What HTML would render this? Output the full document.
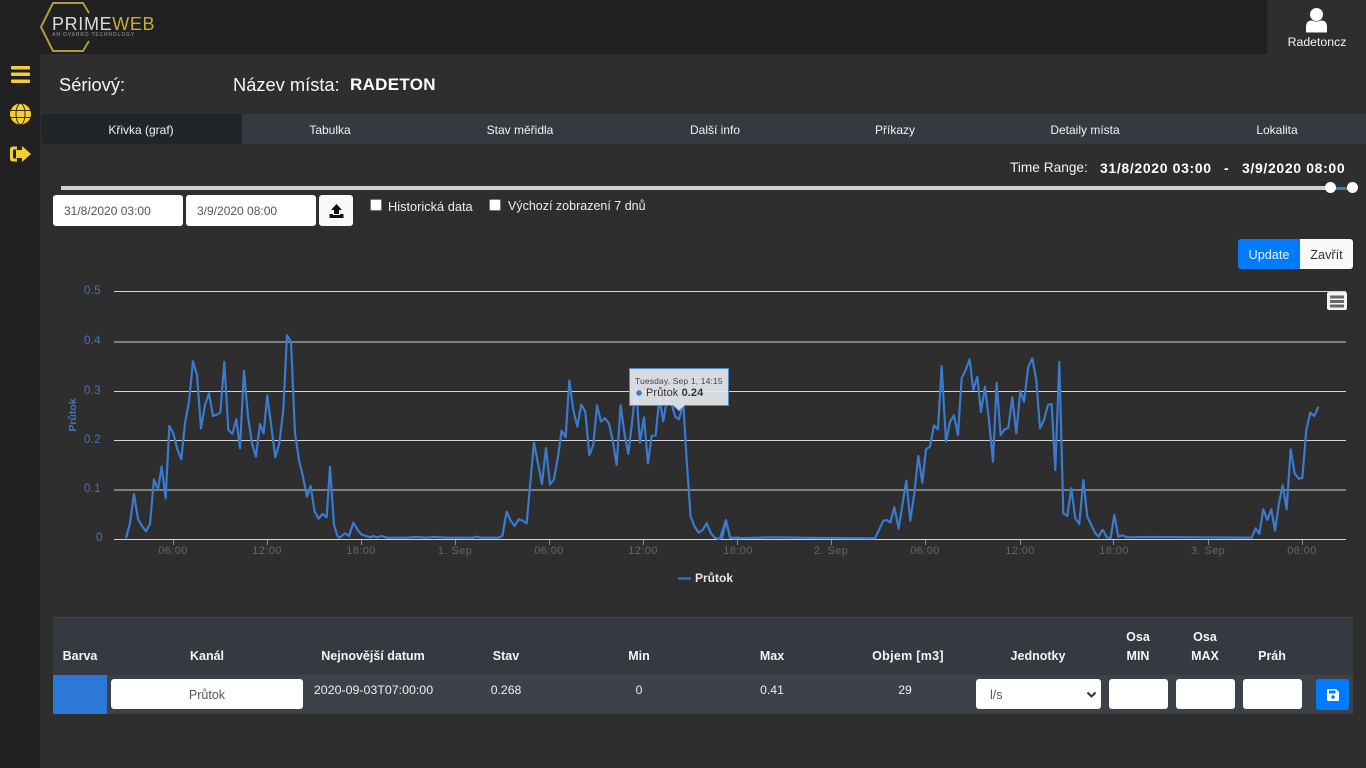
<!DOCTYPE html>
<html lang="cs"><head><meta charset="utf-8"><title>PrimeWeb</title>
<style>
*{box-sizing:border-box}
html,body{margin:0;padding:0;width:1366px;height:768px;overflow:hidden;background:#2e2e2e;font-family:"Liberation Sans",sans-serif;color:#fff}
.a{position:absolute;white-space:nowrap}
.c{position:absolute;white-space:nowrap;transform:translateX(-50%)}
.in{position:absolute;background:#fff;border-radius:3px;color:#555}
.tab{font-size:12px;top:122.500px;color:#f2f2f2}
.th{font-size:12.5px;font-weight:bold;color:#f5f5f5}
.td{font-size:12.2px;color:#eee}
.xl{position:absolute;top:545px;font-size:11px;color:#666;transform:translateX(-50%);letter-spacing:.4px}
.yl{position:absolute;left:84px;font-size:11.5px;color:#3f75c6;letter-spacing:.3px}
</style></head><body>
<div class="a" style="left:0;top:0;width:1366px;height:54px;background:#212121"></div>
<div class="a" style="left:0;top:54px;width:40px;height:714px;background:#212121"></div>
<div class="a" style="left:1267px;top:0;width:99px;height:54px;background:#2e2e2e"></div>

<svg class="a" style="left:38px;top:0" width="124" height="54" viewBox="0 0 124 54">
<path d="M51 13 L45 3 H15 L3 27 L15 51 H45 L51 41" fill="none" stroke="#b39a3a" stroke-width="2"/>
</svg>
<div class="a" style="left:52px;top:12px;font-size:18px;letter-spacing:.65px;color:#dcdcdc;line-height:24px">PRIME<span style="color:#c9a93a">WEB</span></div>
<div class="a" style="left:52px;top:32px;font-size:5px;letter-spacing:.8px;color:#7c7c7c;font-weight:bold;line-height:7px">AN OVARRO TECHNOLOGY</div>

<svg class="a" style="left:0;top:54px" width="40" height="120" viewBox="0 0 40 120">
<g fill="#f5cf32">
<rect x="11" y="12" width="19" height="3.500" rx="1"/><rect x="11" y="18.500" width="19" height="3.500" rx="1"/><rect x="11" y="25.500" width="19" height="3.500" rx="1"/>
<circle cx="20.500" cy="60" r="10.500"/>
<path d="M22 92 L31 100 L22 108 V104 H16 V96 H22 Z"/>
<path d="M17 92.500 H13 Q10 92.500 10 95.500 V104.500 Q10 107.500 13 107.500 H17 V104.500 H14 Q13 104.500 13 103.500 V96.500 Q13 95.500 14 95.500 H17 Z"/>
</g>
<g fill="none" stroke="#3a3212" stroke-width="1">
<ellipse cx="20.500" cy="60" rx="4.500" ry="10.500"/><path d="M10 56.500H31M10 63.500H31"/>
</g>
</svg>

<svg class="a" style="left:1303px;top:7px" width="28" height="27" viewBox="0 0 28 27">
<circle cx="13.500" cy="7.500" r="6.500" fill="#fff"/><path d="M3 25 V20 Q3 13.500 9 13.500 Q13.500 15.500 18 13.500 Q24 13.500 24 20 V25 Q24 25.500 23 25.500 H4 Q3 25.500 3 25Z" fill="#fff"/>
</svg>
<div class="c" style="left:1317px;top:35px;font-size:12.300px;color:#f5f5f5">Radetoncz</div>

<div class="a" style="left:59px;top:74px;font-size:18.300px;color:#f5f5f5">Sériový:</div>
<div class="a" style="left:233px;top:74px;font-size:18.300px;color:#f5f5f5">Název místa:</div>
<div class="a" style="left:350px;top:75px;font-size:17px;font-weight:bold;letter-spacing:.3px">RADETON</div>

<div class="a" style="left:41px;top:114px;width:1325px;height:30px;background:#343a40"></div>
<div class="a" style="left:41px;top:114px;width:201px;height:30px;background:#212529;border-radius:3px 0 0 3px"></div>
<div class="c tab" style="left:141px">Křivka (graf)</div>
<div class="c tab" style="left:330px">Tabulka</div>
<div class="c tab" style="left:520px">Stav měřidla</div>
<div class="c tab" style="left:715px">Další info</div>
<div class="c tab" style="left:895px">Příkazy</div>
<div class="c tab" style="left:1085px">Detaily místa</div>
<div class="c tab" style="left:1277px">Lokalita</div>

<div class="a" style="left:1010px;top:160px;font-size:13.700px;color:#f2f2f2">Time Range:</div>
<div class="a" style="left:1100px;top:160px;font-size:14px;font-weight:bold;letter-spacing:.65px">31/8/2020 03:00</div>
<div class="a" style="left:1224px;top:160px;font-size:14px;font-weight:bold">-</div>
<div class="a" style="left:1242px;top:160px;font-size:14px;font-weight:bold;letter-spacing:.65px">3/9/2020 08:00</div>

<div class="a" style="left:61px;top:186px;width:1272px;height:4px;background:#d0d0d0"></div>
<div class="a" style="left:1331px;top:186.500px;width:22px;height:3.500px;background:#3d7ea6"></div>
<div class="a" style="left:1325px;top:182px;width:11px;height:11px;border-radius:50%;background:#fff"></div>
<div class="a" style="left:1347px;top:182px;width:11px;height:11px;border-radius:50%;background:#fff"></div>

<div class="in" style="left:53px;top:195px;width:130px;height:31px;font-size:12px;line-height:33px;padding-left:11px">31/8/2020 03:00</div>
<div class="in" style="left:186px;top:195px;width:130px;height:31px;font-size:12px;line-height:33px;padding-left:11px">3/9/2020 08:00</div>
<div class="in" style="left:319px;top:195px;width:34px;height:31px;background:#f8f9fa"></div>
<svg class="a" style="left:329px;top:204px" width="15" height="14" viewBox="0 0 15 14"><path d="M7.500 0 L13 6 H10 V10 H5 V6 H2Z M0.500 10 H4 V11 H11 V10 H14.500 V14 H0.500Z" fill="#111"/></svg>

<div class="a" style="left:370px;top:199px;width:12px;height:12px;background:#fff;border-radius:2px;border:1px solid #777"></div>
<div class="a" style="left:388px;top:198.500px;font-size:12.800px;color:#eee">Historická data</div>
<div class="a" style="left:489px;top:199px;width:12px;height:12px;background:#fff;border-radius:2px;border:1px solid #777"></div>
<div class="a" style="left:508px;top:198.500px;font-size:12.500px;color:#eee">Výchozí zobrazení 7 dnů</div>

<div class="a" style="left:1238px;top:239px;width:62px;height:30px;background:#007bff;border-radius:3px 0 0 3px;font-size:12.700px;line-height:32px;text-align:center;color:#e8f4ff">Update</div>
<div class="a" style="left:1300px;top:239px;width:53px;height:30px;background:#f8f9fa;border-radius:0 3px 3px 0;font-size:12.700px;line-height:32px;text-align:center;color:#333">Zavřít</div>

<svg class="a" style="left:0;top:0;pointer-events:none" width="1366" height="768" viewBox="0 0 1366 768">
<g fill="#d4d4d4">
<rect x="114" y="291" width="1232" height="1"/>
<rect x="114" y="391" width="1232" height="1"/>
<rect x="114" y="440" width="1232" height="1"/>
<rect x="114" y="539" width="1232" height="1"/>
</g>
<g fill="#7f7f7f">
<rect x="114" y="341" width="1232" height="2"/>
<rect x="114" y="489" width="1232" height="2"/>
</g>
<g fill="#8a8a8a">
<rect x="173" y="540" width="1" height="5"/><rect x="267" y="540" width="1" height="5"/><rect x="361" y="540" width="1" height="5"/><rect x="455" y="540" width="1" height="5"/><rect x="549" y="540" width="1" height="5"/><rect x="643" y="540" width="1" height="5"/><rect x="737" y="540" width="1" height="5"/><rect x="831" y="540" width="1" height="5"/><rect x="925" y="540" width="1" height="5"/><rect x="1020" y="540" width="1" height="5"/><rect x="1113" y="540" width="1" height="5"/><rect x="1208" y="540" width="1" height="5"/><rect x="1302" y="540" width="1" height="5"/>
</g>
<g fill="none" stroke="#3a7bd0" stroke-width="6.500" stroke-linejoin="round">
<polyline transform="translate(100 320) scale(.3333)" points="78,655 90,610 102,522 114,598 126,618 138,634 150,612 162,478 174,508 185,440 197,535 208,318 220,340 232,388 244,418 255,310 267,245 279,124 291,165 303,325 315,255 327,220 339,288 350,284 361,278 373,126 385,330 397,342 409,298 420,385 432,152 444,290 456,370 468,410 480,312 491,340 502,226 514,320 526,412 538,370 550,270 561,46 573,65 585,340 597,420 609,470 621,530 632,498 644,575 656,596 668,582 680,592 690,440 702,615 714,652"/>
<polyline transform="translate(340 360) scale(.3333)" points="-6,534 3,530 15,520 27,528 40,488 53,510 65,524 90,532 100,528 112,532 124,528 140,533 200,533 230,531 260,533 280,531 320,533 400,533 410,530 420,533 475,533 487,528 500,455 512,482 524,498 536,478 548,482 560,490 570,380 582,248 594,310 606,372 618,264 630,374 642,358 654,290 665,212 677,232 688,62 700,150 712,200 724,134 736,155 748,285 760,255 771,136 783,185 795,175 807,190 818,240 830,315 842,136 854,225 865,282 877,180 888,80 900,248 912,172 924,310 935,228 947,226 958,115 970,184 982,110 994,130 1006,170 1017,178 1030,130 1040,300 1052,470 1064,500 1076,518 1088,510 1100,490 1112,518 1124,533 1136,537 1147,533 1158,482 1170,533 1200,533"/>
<polyline transform="translate(720 340) scale(.3333)" points="0,595 8,570 18,540 30,592 40,595 160,592 300,594 465,595 478,568 490,542 500,540 511,548 523,502 536,566 548,490 559,422 571,542 583,460 595,348 607,428 618,328 630,320 642,256 654,268 665,78 678,305 690,245 702,226 714,285 725,115 737,90 749,58 760,150 772,110 783,216 795,140 807,240 819,365 830,128 842,285 854,268 865,264 877,172 889,280 901,152 912,185 925,80 937,55 949,120 960,265 972,240 984,195 995,192 1006,390 1018,66 1030,520 1042,528 1054,445 1066,535 1078,552 1090,420 1102,530 1114,555 1126,580 1136,590 1148,568"/>
<polyline transform="translate(1100 340) scale(.3333)" points="8,568 20,592 32,594 43,525 55,590 67,586 80,592 160,591 300,592 455,593 467,565 478,582 490,508 502,540 514,508 525,572 537,490 548,436 560,508 572,328 584,400 596,416 607,414 619,270 631,218 643,228 655,200"/>
</g>
<rect x="678" y="577.500" width="13" height="2" fill="#3a7bd0"/>
<rect x="1327" y="292" width="20" height="18" rx="2" fill="#f2f2f2"/>
<g fill="#666"><rect x="1330" y="295.500" width="14" height="3"/><rect x="1330" y="300" width="14" height="3"/><rect x="1330" y="304.500" width="14" height="3"/></g>
<path d="M629.500 368.500 H728.500 V405.500 H685 L679 411 L673 405.500 H629.500Z" fill="#e4e8ee" fill-opacity=".93" stroke="#4f88c8"/>
<circle cx="639" cy="393" r="2.800" fill="#3a7bd0"/>
</svg>

<div class="yl" style="top:285px">0.5</div>
<div class="yl" style="top:335px">0.4</div>
<div class="yl" style="top:384.500px">0.3</div>
<div class="yl" style="top:433.500px">0.2</div>
<div class="yl" style="top:482.500px">0.1</div>
<div class="yl" style="top:532px;left:96px">0</div>
<div class="a" style="left:50px;top:409px;width:46px;text-align:center;font-size:10.500px;font-weight:bold;color:#3b78c9;transform:rotate(-90deg)">Průtok</div>

<div class="xl" style="left:173px">06:00</div><div class="xl" style="left:267px">12:00</div><div class="xl" style="left:361px">18:00</div><div class="xl" style="left:455px">1. Sep</div><div class="xl" style="left:549px">06:00</div><div class="xl" style="left:643px">12:00</div><div class="xl" style="left:738px">18:00</div><div class="xl" style="left:831px">2. Sep</div><div class="xl" style="left:925px">06:00</div><div class="xl" style="left:1020px">12:00</div><div class="xl" style="left:1114px">18:00</div><div class="xl" style="left:1208px">3. Sep</div><div class="xl" style="left:1302px">06:00</div>

<div class="a" style="left:635px;top:376px;font-size:8.500px;color:#444;letter-spacing:.15px">Tuesday, Sep 1, 14:15</div>
<div class="a" style="left:646px;top:387px;font-size:11px;color:#333;letter-spacing:.1px">Průtok <b>0.24</b></div>
<div class="a" style="left:695px;top:570.500px;font-size:12px;font-weight:bold;color:#e8e8e8">Průtok</div>

<div class="a" style="left:53px;top:617px;width:1300px;height:58px;background:#343a40;border-top:1px solid #3f454c"></div>
<div class="a" style="left:53px;top:675px;width:1300px;height:39px;background:#3d4249"></div>
<div class="a" style="left:53px;top:675px;width:54px;height:39px;background:#2b78d8"></div>

<div class="c th" style="left:80px;top:649px">Barva</div>
<div class="c th" style="left:207px;top:649px">Kanál</div>
<div class="c th" style="left:373px;top:649px">Nejnovější datum</div>
<div class="c th" style="left:506px;top:649px">Stav</div>
<div class="c th" style="left:639px;top:649px">Min</div>
<div class="c th" style="left:772px;top:649px">Max</div>
<div class="c th" style="left:908px;top:649px;letter-spacing:.3px">Objem [m3]</div>
<div class="c th" style="left:1038px;top:649px">Jednotky</div>
<div class="c th" style="left:1138px;top:630px">Osa</div>
<div class="c th" style="left:1138px;top:649px">MIN</div>
<div class="c th" style="left:1205px;top:630px">Osa</div>
<div class="c th" style="left:1205px;top:649px">MAX</div>
<div class="c th" style="left:1272px;top:649px">Práh</div>

<div class="in" style="left:111px;top:679px;width:192px;height:30px;font-size:12.5px;line-height:32px;text-align:center">Průtok</div>
<div class="c td" style="left:373.500px;top:682.500px;font-size:12.400px">2020-09-03T07:00:00</div>
<div class="c td" style="left:506px;top:682.500px">0.268</div>
<div class="c td" style="left:639px;top:682.500px">0</div>
<div class="c td" style="left:772px;top:682.500px">0.41</div>
<div class="c td" style="left:905px;top:682.500px">29</div>
<div class="in" style="left:976px;top:679px;width:125px;height:30px;font-size:12.5px;line-height:32px;padding-left:14px">l/s</div>
<svg class="a" style="left:1086px;top:691px" width="11" height="8" viewBox="0 0 11 8"><path d="M1.500 1.500 L5.500 5.500 L9.500 1.500" fill="none" stroke="#333" stroke-width="2"/></svg>
<div class="in" style="left:1109px;top:679px;width:59px;height:30px"></div>
<div class="in" style="left:1176px;top:679px;width:59px;height:30px"></div>
<div class="in" style="left:1243px;top:679px;width:59px;height:30px"></div>
<div class="a" style="left:1316px;top:679px;width:33px;height:31px;background:#007bff;border-radius:3px"></div>
<svg class="a" style="left:1327px;top:689px" width="12" height="12" viewBox="0 0 12 12"><path d="M1 0 H9 L12 3 V11 Q12 12 11 12 H1 Q0 12 0 11 V1 Q0 0 1 0Z" fill="#fff"/><rect x="2" y="1.500" width="6.500" height="3" fill="#007bff"/><circle cx="6" cy="8" r="1.800" fill="#007bff"/></svg>
</body></html>
